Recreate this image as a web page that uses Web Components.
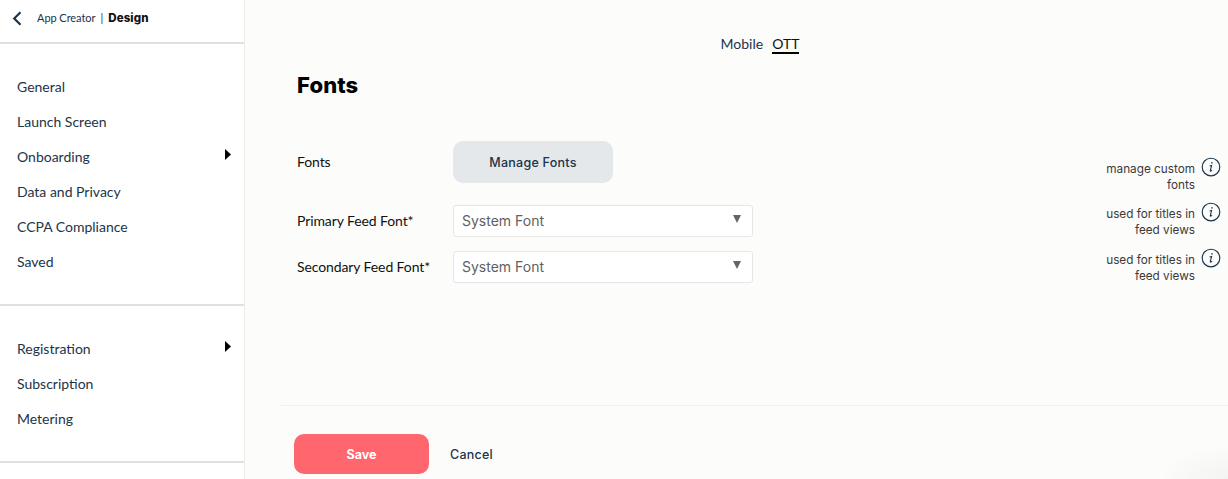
<!DOCTYPE html>
<html><head><meta charset="utf-8"><title>Design</title>
<style>
html,body{margin:0;padding:0;height:479px;overflow:hidden;background:#fcfcfa}
body{font-family:Lato,sans-serif}
</style></head><body>
<app-shell>
  <side-nav slot="side"></side-nav>
  <font-page slot="main"></font-page>
</app-shell>
<script>
const NAVY='#1c3449';
function def(name,css,html){
  customElements.define(name,class extends HTMLElement{
    connectedCallback(){
      if(this.shadowRoot)return;
      const s=this.attachShadow({mode:'open'});
      s.innerHTML='<style>'+css+'</style>'+(typeof html==='function'?html(this):html);
    }
  });
}
def('app-shell',':host{display:flex;width:1228px;height:479px;overflow:hidden;position:relative}::slotted([slot=side]){flex:0 0 245px}::slotted([slot=main]){flex:1;min-width:0}',
 '<slot name="side"></slot><slot name="main"></slot>');
def('nav-item',`:host{display:flex;align-items:center;justify-content:space-between;height:35px;padding:0 13px 0 17px;font:14px/35px Lato,sans-serif;color:${NAVY}}
 svg{display:block;margin-top:-4px}`,
 el=>'<slot></slot>'+(el.hasAttribute('arrow')?'<svg width="6" height="11" viewBox="0 0 6 11"><path d="M0 0L6 5.5L0 11Z" fill="#000"/></svg>':''));
def('side-nav',`:host{display:block;box-sizing:border-box;width:245px;height:479px;background:#fff;border-right:1px solid #ececea}
 header{display:flex;align-items:center;border-bottom:2px solid #e0e0e0;padding:0 0 6px 12px;height:36px}
 header svg{margin-right:15px;display:block}
 .t{font:11px Lato,sans-serif;color:${NAVY};letter-spacing:-.05px;margin-top:-1px}
 .sep{margin:0 5px;color:${NAVY};font:11px Lato,sans-serif;margin-top:-1px}
 b{font:800 11.5px Inter,sans-serif;color:#111;letter-spacing:.1px}
 .g1{padding:25px 0 25px;border-bottom:2px solid #e0e0e0}
 .g2{padding:25px 0 25px;border-bottom:2px solid #e0e0e0}`,
 `<header><svg width="10" height="15" viewBox="0 0 10 15"><path d="M8.5 1.2L2.2 7.5L8.5 13.8" fill="none" stroke="${NAVY}" stroke-width="2.2"/></svg><span class="t">App Creator</span><span class="sep">|</span><b>Design</b></header>
 <div class="g1"><nav-item>General</nav-item><nav-item>Launch Screen</nav-item><nav-item arrow>Onboarding</nav-item><nav-item>Data and Privacy</nav-item><nav-item>CCPA Compliance</nav-item><nav-item>Saved</nav-item></div>
 <div class="g2"><nav-item arrow>Registration</nav-item><nav-item>Subscription</nav-item><nav-item>Metering</nav-item></div>`);
def('info-note',`:host{display:flex;justify-content:flex-end;align-items:flex-start;gap:6px;width:124px}
 div{font:11.75px/16px Inter,sans-serif;color:#3a3a3a;text-align:right;padding-top:4px}
 svg{display:block;flex:none}`,
 `<div><slot></slot></div><svg width="20" height="20" viewBox="0 0 20 20"><circle cx="10" cy="10" r="8.8" fill="none" stroke="${NAVY}" stroke-width="1.15"/><path d="M10.9 5.3v1.1" stroke="${NAVY}" stroke-width="1.5" fill="none"/><path d="M8.6 8.9l2-.5-1.3 5.2c-.1.6.4.7.9.3l.9-.8" stroke="${NAVY}" stroke-width="1.05" fill="none"/></svg>`);
def('select-box',`:host{display:flex;align-items:center;justify-content:space-between;box-sizing:border-box;width:300px;height:32px;background:#fff;border:1px solid #e6e6e6;border-radius:3px;padding:0 11px 2px 8px;font:14px Inter,sans-serif;color:#5f5f5f}
 svg{display:block;margin-top:-2px}`,
 `<slot></slot><svg width="8" height="8" viewBox="0 0 8 8"><path d="M0 0H8L4 8Z" fill="#666"/></svg>`);
def('form-row',`:host{display:flex;align-items:center;font:14px Lato,sans-serif;color:#111}
 .l{flex:0 0 156px;padding-bottom:2px;letter-spacing:-.1px}`,
 `<span class="l"><slot name="label"></slot></span><slot></slot>`);
def('font-page',`:host{display:block;position:relative;height:479px;font-family:Lato,sans-serif}
 :host::after{content:"";position:absolute;right:0;bottom:0;width:70px;height:34px;background:radial-gradient(ellipse at 100% 100%,rgba(0,0,0,.035),rgba(0,0,0,0) 70%);pointer-events:none}
 .tabs{display:flex;justify-content:center;gap:9px;padding-top:35px;height:19px;font:14px/18px Lato,sans-serif;color:${NAVY};padding-left:47px}
 .tabs u{text-decoration:none;color:#111;border-bottom:2px solid #000;height:17px;line-height:17px}
 main{padding:0 0 0 52px}
 h1{font:800 22px/26px Inter,sans-serif;color:#000;margin:0;padding-top:18px;height:26px;letter-spacing:.1px}
 .rows{margin-top:43px;display:flex;flex-direction:column}
 .mb{display:flex;align-items:center;justify-content:center;width:160px;height:42px;background:#e4e8eb;border-radius:10px;font:500 12.5px Inter,sans-serif;color:${NAVY};letter-spacing:.25px}
 form-row:nth-child(2){margin-top:22px}
 form-row:nth-child(3){margin-top:14px}
 .notes{position:absolute;right:7px;top:157px;display:flex;flex-direction:column;gap:9px}
 .notes info-note:last-child{margin-top:1px}
 footer{position:absolute;left:36px;right:0;top:405px;border-top:1px solid #f0f0ee;display:flex;align-items:center;padding:28px 0 0 13px;gap:21px}
 .save{display:flex;align-items:center;justify-content:center;width:135px;height:40px;background:#ff666e;border-radius:10px;color:#fff;font:700 12.5px Inter,sans-serif}
 .cancel{font:500 12.5px Inter,sans-serif;color:${NAVY};letter-spacing:.25px}`,
 `<div class="tabs"><span>Mobile</span><u>OTT</u></div>
 <main><h1>Fonts</h1>
 <div class="rows">
  <form-row><span slot="label">Fonts</span><div class="mb">Manage Fonts</div></form-row>
  <form-row><span slot="label">Primary Feed Font*</span><select-box>System Font</select-box></form-row>
  <form-row><span slot="label">Secondary Feed Font*</span><select-box>System Font</select-box></form-row>
 </div></main>
 <div class="notes"><info-note>manage custom fonts</info-note><info-note>used for titles in feed views</info-note><info-note>used for titles in feed views</info-note></div>
 <footer><div class="save">Save</div><div class="cancel">Cancel</div></footer>`);
</script>
</body></html>
